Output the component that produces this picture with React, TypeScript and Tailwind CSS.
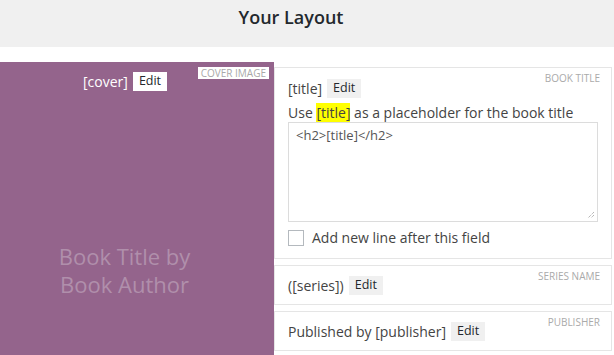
import React from "react";

const font = { fontFamily: '"Open Sans", "Noto Sans", sans-serif' };

function EditButton({ light }: { light?: boolean }) {
  return (
    <span
      className={
        "inline-flex h-[19px] items-center px-[6px] text-[12.5px] leading-none text-[#23282d] " +
        (light ? "bg-white" : "bg-[#f0f0f0]")
      }
    >
      Edit
    </span>
  );
}

function FieldCard({
  label,
  children,
}: {
  label: string;
  children: React.ReactNode;
}) {
  return (
    <div className="relative border border-[#e5e5e5] bg-white px-[13px]">
      <span className="absolute right-[11px] top-[3px] text-[10px] uppercase text-[#aaaaaa]">
        {label}
      </span>
      {children}
    </div>
  );
}

export default function App() {
  return (
    <div className="h-[355px] w-[614px] overflow-hidden bg-white" style={font}>
      {/* Header */}
      <div className="flex h-[47px] justify-center bg-[#f0f0f0] pt-[4px] pr-[32px]">
        <h1 className="text-[18px] font-semibold text-[#23282d]">Your Layout</h1>
      </div>

      <div className="mt-[15px] flex">
        {/* Cover preview */}
        <div className="relative flex h-[300px] w-[274px] shrink-0 flex-col bg-[#94648c]">
          <span className="absolute right-[5px] top-[5px] bg-white px-[3px] text-[10px] leading-[12px] text-[#a9a9a9]">
            COVER IMAGE
          </span>
          <div className="mt-[9px] flex items-center gap-[5px] pl-[83px]">
            <span className="text-[14px] text-white">[cover]</span>
            <EditButton light />
          </div>
          <div className="mt-[150px] pr-[25px] text-center text-[22px] leading-[28px] text-[#b08fab]">
            Book Title by
            <br />
            Book Author
          </div>
        </div>

        {/* Fields */}
        <div className="mt-[5px] mr-[5px] flex flex-1 flex-col gap-[6px]">
          <FieldCard label="Book Title">
            <div className="mt-[10px] flex items-center gap-[5px]">
              <span className="text-[14px] text-[#444]">[title]</span>
              <EditButton />
            </div>
            <p className="mt-[4px] text-[14px] leading-[19px] text-[#444]">
              Use <span className="bg-[#ffff00]">[title]</span> as a placeholder for the book title
            </p>
            <div className="relative h-[100px] w-[310px] border border-[#dcdcdc] px-[7px] py-[3px] text-[13px] text-[#555]">
              {"<h2>[title]</h2>"}
              <svg className="absolute bottom-[2px] right-[2px]" width="8" height="8" viewBox="0 0 8 8">
                <path d="M7 1 L1 7 M7 4 L4 7" stroke="#999" strokeWidth="1" strokeDasharray="1 1" />
              </svg>
            </div>
            <label className="mt-[5px] mb-[10px] flex items-center gap-[8px]">
              <span className="h-[16px] w-[16px] border border-[#b4b9be] bg-white" />
              <span className="text-[14px] text-[#444]">Add new line after this field</span>
            </label>
          </FieldCard>

          <FieldCard label="Series Name">
            <div className="flex h-[38px] items-center gap-[5px]">
              <span className="text-[14px] text-[#444]">([series])</span>
              <EditButton />
            </div>
          </FieldCard>

          <FieldCard label="Publisher">
            <div className="flex h-[38px] items-center gap-[5px]">
              <span className="text-[14px] text-[#444]">Published by [publisher]</span>
              <EditButton />
            </div>
          </FieldCard>
        </div>
      </div>
    </div>
  );
}
